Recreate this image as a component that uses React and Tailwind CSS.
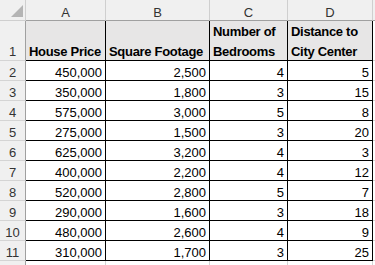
import React from "react";

const rows = [
  ["450,000", "2,500", "4", "5"],
  ["350,000", "1,800", "3", "15"],
  ["575,000", "3,000", "5", "8"],
  ["275,000", "1,500", "3", "20"],
  ["625,000", "3,200", "4", "3"],
  ["400,000", "2,200", "4", "12"],
  ["520,000", "2,800", "5", "7"],
  ["290,000", "1,600", "3", "18"],
  ["480,000", "2,600", "4", "9"],
  ["310,000", "1,700", "3", "25"],
];

const headers = [
  ["House Price"],
  ["Square Footage"],
  ["Number of", "Bedrooms"],
  ["Distance to", "City Center"],
];

export default function App() {
  return (
    <div className="w-[375px] h-[265px] overflow-hidden bg-white font-['Liberation_Sans',Arial,sans-serif] text-[13px] text-black">
      <div className="grid grid-cols-[26px_80px_104px_78px_85px_2px]">
        {/* column header row */}
        <div className="h-[21px] bg-[#f0f0f0] border-r border-b border-[#cfcfcf] flex items-end justify-end pr-[2px] pb-[3px]">
          <svg width="12" height="12" viewBox="0 0 12 12">
            <polygon points="12,0 12,12 0,12" fill="#b4b4b4" />
          </svg>
        </div>
        {["A", "B", "C", "D"].map((c) => (
          <div
            key={c}
            className="h-[21px] bg-[#f0f0f0] border-r border-r-[#cfcfcf] border-b border-b-[#a0a0a0] flex items-end justify-center leading-[15px] text-[#333]"
          >
            {c}
          </div>
        ))}
        <div className="h-[21px] bg-[#f0f0f0] border-b border-b-[#a0a0a0]" />

        {/* row 1 */}
        <div className="h-[40px] bg-[#f0f0f0] border-r border-r-[#a0a0a0] border-b border-b-[#d4d4d4] flex items-end justify-center text-[#333]">
          <div className="leading-[20px] -mb-0.5">1</div>
        </div>
        {headers.map((h, i) => (
          <div
            key={i}
            className="h-[40px] bg-[#e7e6e6] border-r border-b border-black flex items-end pl-[3px] font-bold whitespace-nowrap tracking-[-0.3px]"
          >
            <div className="leading-[20px] -mb-0.5">
              {h.map((line) => (
                <div key={line}>{line}</div>
              ))}
            </div>
          </div>
        ))}
        <div className="h-[40px] bg-white border-b border-b-[#d4d4d4]" />

        {/* data rows */}
        {rows.map((r, ri) => (
          <React.Fragment key={ri}>
            <div className="h-[20px] bg-[#f0f0f0] border-r border-r-[#a0a0a0] border-b border-b-[#d4d4d4] flex items-end justify-center leading-[15px] text-[#333]">
              {ri + 2}
            </div>
            {r.map((v, ci) => (
              <div
                key={ci}
                className="h-[20px] border-r border-b border-black flex items-end justify-end pr-[3px] leading-[15px]"
              >
                {v}
              </div>
            ))}
            <div className="h-[20px] bg-white border-b border-b-[#d4d4d4]" />
          </React.Fragment>
        ))}

        {/* partial row 12 */}
        <div className="h-[4px] bg-[#f0f0f0] border-r border-r-[#a0a0a0]" />
        <div className="h-[4px] border-r border-r-[#d4d4d4]" />
        <div className="h-[4px] border-r border-r-[#d4d4d4]" />
        <div className="h-[4px] border-r border-r-[#d4d4d4]" />
        <div className="h-[4px] border-r border-r-[#d4d4d4]" />
        <div className="h-[4px]" />
      </div>
    </div>
  );
}
